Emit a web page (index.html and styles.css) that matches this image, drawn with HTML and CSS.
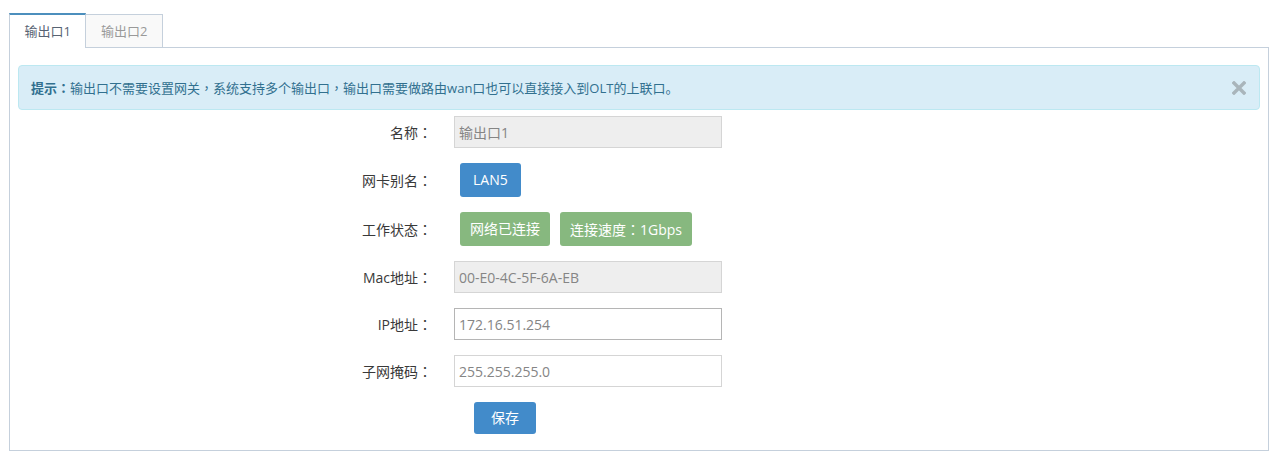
FILE: index.html
```html
<!DOCTYPE html>
<html lang="zh-CN">
<head>
  <meta charset="UTF-8">
  <title>输出口设置</title>
  <link rel="stylesheet" href="styles.css">
</head>
<body>
  <div class="tabbable">
    <ul class="nav-tabs">
      <li class="tab active">输出口1</li>
      <li class="tab">输出口2</li>
    </ul>
    <div class="tab-content">
      <div class="alert-info">
        <span class="alert-text"><strong>提示<span class="punct" lang="zh-TW">：</span></strong>输出口不需要设置网关<span class="punct" lang="zh-TW">，</span>系统支持多个输出口<span class="punct" lang="zh-TW">，</span>输出口需要做路由wan口也可以直接接入到OLT的上联口。</span>
        <span class="close-btn">
          <svg width="14" height="14" viewBox="0 0 14 14">
            <path d="M2 2 L12 12 M12 2 L2 12" stroke="#a9b5bb" stroke-width="3.4" stroke-linecap="square"/>
          </svg>
        </span>
      </div>

      <form class="port-form">
        <div class="form-row">
          <label class="form-label">名称<span class="punct" lang="zh-TW">：</span></label>
          <input class="form-input" type="text" value="输出口1" readonly>
        </div>
        <div class="form-row">
          <label class="form-label">网卡别名<span class="punct" lang="zh-TW">：</span></label>
          <div class="btn-group">
            <span class="btn btn-primary btn-lan">LAN5</span>
          </div>
        </div>
        <div class="form-row">
          <label class="form-label">工作状态<span class="punct" lang="zh-TW">：</span></label>
          <div class="btn-group">
            <span class="btn btn-success">网络已连接</span>
            <span class="btn btn-success">连接速度<span class="punct" lang="zh-TW">：</span>1Gbps</span>
          </div>
        </div>
        <div class="form-row">
          <label class="form-label">Mac地址<span class="punct" lang="zh-TW">：</span></label>
          <input class="form-input" type="text" value="00-E0-4C-5F-6A-EB" readonly>
        </div>
        <div class="form-row">
          <label class="form-label">IP地址<span class="punct" lang="zh-TW">：</span></label>
          <input class="form-input hover" type="text" value="172.16.51.254">
        </div>
        <div class="form-row">
          <label class="form-label">子网掩码<span class="punct" lang="zh-TW">：</span></label>
          <input class="form-input" type="text" value="255.255.255.0">
        </div>
        <div class="form-row last">
          <span class="form-label"></span>
          <button class="btn btn-primary btn-save" type="button">保存</button>
        </div>
      </form>
    </div>
  </div>
</body>
</html>
```

FILE: styles.css
```css
body {
  margin: 0;
  padding: 13px 12px 0 9px;
  background-color: #fff;
  color: #393939;
  font-family: "Open Sans", "Noto Sans CJK SC", sans-serif;
  font-size: 13px;
}
.punct {
  font-family: "Noto Sans CJK TC", sans-serif;
}
.nav-tabs {
  list-style: none;
  margin: 0;
  padding: 0;
  display: flex;
  align-items: flex-end;
}
.tab {
  box-sizing: border-box;
  height: 33px;
  line-height: 32px;
  padding: 0 14.5px;
  border: 1px solid #c5d0dc;
  border-bottom: none;
  background-color: #f9f9f9;
  color: #999;
}
.tab.active {
  position: relative;
  z-index: 1;
  height: 35px;
  line-height: 32px;
  margin-bottom: -1px;
  border-top: 2px solid #4c8fbd;
  background-color: #fff;
  color: #576373;
}
.tab + .tab {
  margin-left: -1px;
}
.tab-content {
  border: 1px solid #c5d0dc;
  padding: 17px 8px 16px;
  min-height: 369px;
}
.alert-info {
  display: flex;
  align-items: center;
  justify-content: space-between;
  height: 43px;
  padding: 0 13px 0 12px;
  background-color: #d9edf7;
  border: 1px solid #bce8f1;
  border-radius: 4px;
  color: #31708f;
}
.alert-text strong {
  font-weight: bold;
}
.close-btn {
  display: flex;
  margin-top: 1px;
}
.port-form {
  margin-top: 6px;
}
.form-row {
  display: flex;
  align-items: center;
  margin-bottom: 15px;
}
.form-row.last {
  margin-bottom: 0;
}
.form-label {
  width: 414px;
  flex: none;
  text-align: right;
  font-size: 14px;
  color: #393939;
  margin-right: 22px;
}
.form-input {
  box-sizing: border-box;
  width: 268px;
  height: 32px;
  padding: 0 4px;
  border: 1px solid #d5d5d5;
  background-color: #fff;
  color: #858585;
  font-family: "Open Sans", "Noto Sans CJK SC", sans-serif;
  font-size: 14px;
  outline: none;
}
.form-input[readonly] {
  background-color: #eee;
}
.form-input.hover {
  border-color: #b5b5b5;
}
.btn-group {
  display: flex;
  gap: 10px;
  margin-left: 6px;
}
.btn {
  box-sizing: border-box;
  height: 34px;
  line-height: 34px;
  padding: 0 10px;
  border: none;
  border-radius: 3px;
  color: #fff;
  font-family: "Open Sans", "Noto Sans CJK SC", sans-serif;
  font-size: 14px;
  cursor: pointer;
}
.btn-primary {
  background-color: #428bca;
}
.btn-success {
  background-color: #87b87f;
}
.btn-lan {
  padding: 0 13px;
}
.btn-save {
  height: 32px;
  line-height: 32px;
  padding: 0 17px;
  margin-left: 20px;
}
```
